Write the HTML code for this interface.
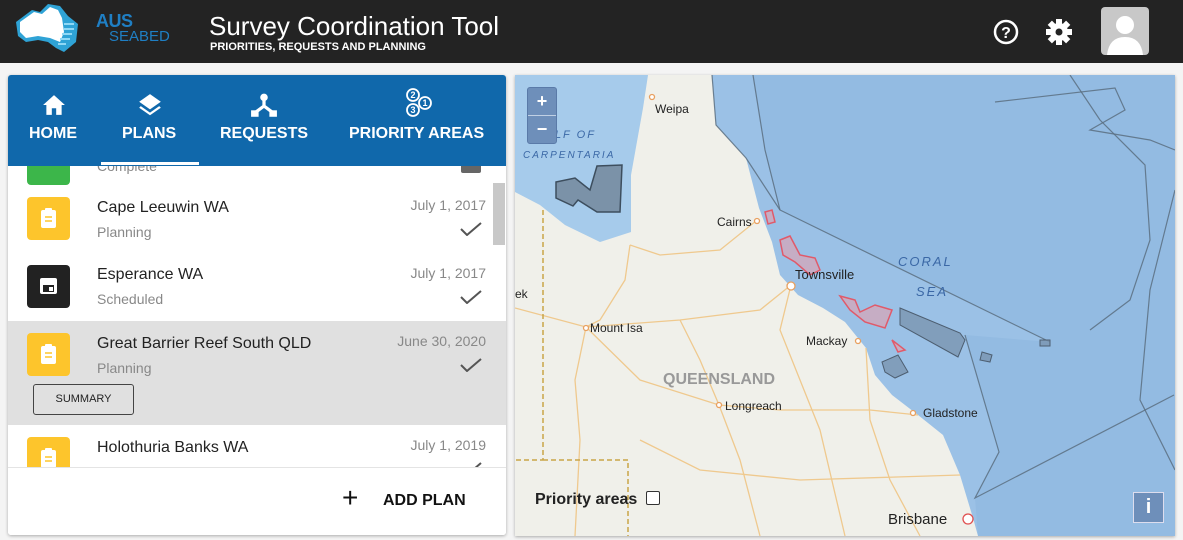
<!DOCTYPE html>
<html><head><meta charset="utf-8">
<style>
*{box-sizing:border-box;margin:0;padding:0}
body{width:1183px;height:540px;overflow:hidden;background:#f4f4f4;font-family:"Liberation Sans",sans-serif;position:relative}
.hdr{position:absolute;left:0;top:0;width:1183px;height:63px;background:#232323}
.abs{position:absolute}
.panel{position:absolute;left:8px;top:75px;width:498px;height:460px;background:#fff;box-shadow:0 1px 3px rgba(0,0,0,.3);overflow:hidden;border-radius:3px}
.tabs{position:absolute;left:0;top:0;width:498px;height:91px;background:#1068ab;color:#fff}
.tab{position:absolute;top:50px;font-size:16px;font-weight:bold;text-align:center}
.row{position:absolute;left:0;width:498px}
.ic{position:absolute;left:19px;width:43px;height:43px;border-radius:4px;background:#fdc52c}
.t{position:absolute;left:89px;font-size:16px;color:#222}
.s{position:absolute;left:89px;font-size:14px;color:#888}
.d{position:absolute;right:20px;font-size:14px;color:#888}
.ck{position:absolute;left:452px;width:22px;height:14px}
.map{position:absolute;left:515px;top:75px;width:660px;height:461px;overflow:hidden;background:#99bfe4;box-shadow:0 1px 3px rgba(0,0,0,.3)}
</style></head><body>
<div class="hdr">
 <svg class="abs" style="left:12px;top:2px" width="70" height="52" viewBox="0 0 70 52">
  <path d="M4 20 L20 8 L28 10 L36 2 L48 4 L56 14 L66 22 L64 40 L52 50 L44 46 L36 40 L26 38 L14 40 L6 34 Z" fill="#2fa3d6"/>
  <path d="M8 20 L22 10 L30 12 L38 5 L46 8 L50 16 L52 30 L48 40 L38 36 L26 34 L14 36 L8 30 Z" fill="#fff"/>
  <path d="M52 22 h10 M52 27 h10 M50 32 h10 M48 37 h10 M46 42 h8" stroke="#8fd8f5" stroke-width="2"/>
 </svg>
 <div class="abs" style="left:96px;top:12px;font-size:18px;font-weight:bold;color:#1f7fc4;letter-spacing:-0.5px;line-height:18px">AUS</div>
 <div class="abs" style="left:109px;top:29px;font-size:15px;color:#1f7fc4;line-height:16px">SEABED</div>
 <div class="abs" style="left:209px;top:11px;font-size:26px;color:#fff;line-height:30px">Survey Coordination Tool</div>
 <div class="abs" style="left:210px;top:41px;font-size:11px;font-weight:bold;color:#fff">PRIORITIES, REQUESTS AND PLANNING</div>
 <svg class="abs" style="left:992px;top:18px" width="28" height="28" viewBox="0 0 28 28"><circle cx="14" cy="14" r="11" fill="none" stroke="#fff" stroke-width="2.5"/><text x="14" y="20" fill="#fff" font-size="16" font-weight="bold" text-anchor="middle" font-family="Liberation Sans">?</text></svg>
 <svg class="abs" style="left:1045px;top:18px" width="28" height="28" viewBox="0 0 28 28"><g fill="#fff" transform="translate(14 14)"><circle r="9"/><g id="tt"><rect x="-3" y="-13" width="6" height="6"/></g><use href="#tt" transform="rotate(45)"/><use href="#tt" transform="rotate(90)"/><use href="#tt" transform="rotate(135)"/><use href="#tt" transform="rotate(180)"/><use href="#tt" transform="rotate(225)"/><use href="#tt" transform="rotate(270)"/><use href="#tt" transform="rotate(315)"/></g><circle cx="14" cy="14" r="3.5" fill="#232323"/></svg>
 <div class="abs" style="left:1101px;top:7px;width:48px;height:48px;background:#c8c8c8;border-radius:4px;overflow:hidden">
  <svg width="48" height="48"><circle cx="24" cy="18" r="9" fill="#fff"/><path d="M6 48 Q8 30 24 30 Q40 30 42 48 Z" fill="#fff"/></svg>
 </div>
</div>

<div class="panel">
 <div class="row" style="top:91px;height:19px"><div class="ic" style="top:-24px;background:#3cb64a"></div><div class="s" style="top:-8px">Complete</div><div class="abs" style="left:453px;top:-5px;width:20px;height:12px;background:#666;border-radius:2px"></div></div>
 <div class="row" style="top:110px;height:68px">
  <div class="ic" style="top:12px"><svg width="43" height="43"><rect x="14" y="13" width="15" height="18" rx="2" fill="#fff"/><rect x="18" y="11" width="7" height="4" rx="1" fill="#fff"/><path d="M18 20h7M18 24h7" stroke="#fdc52c" stroke-width="1.5"/></svg></div>
  <div class="t" style="top:14px">Cape Leeuwin WA</div><div class="s" style="top:39px">Planning</div>
  <div class="d" style="top:12px">July 1, 2017</div>
  <svg class="ck" style="top:37px" viewBox="0 0 22 14"><path d="M1 7 L7 13 L21 1" fill="none" stroke="#555" stroke-width="2"/></svg>
 </div>
 <div class="row" style="top:178px;height:68px">
  <div class="ic" style="top:12px;background:#222"><svg width="43" height="43"><rect x="13" y="13" width="17" height="16" rx="2" fill="#fff"/><rect x="16" y="20" width="11" height="7" fill="#222"/><rect x="22" y="22" width="4" height="4" fill="#fff"/></svg></div>
  <div class="t" style="top:13px">Esperance WA</div><div class="s" style="top:38px">Scheduled</div>
  <div class="d" style="top:12px">July 1, 2017</div>
  <svg class="ck" style="top:37px" viewBox="0 0 22 14"><path d="M1 7 L7 13 L21 1" fill="none" stroke="#555" stroke-width="2"/></svg>
 </div>
 <div class="row" style="top:246px;height:104px;background:#e0e0e0">
  <div class="ic" style="top:12px"><svg width="43" height="43"><rect x="14" y="13" width="15" height="18" rx="2" fill="#fff"/><rect x="18" y="11" width="7" height="4" rx="1" fill="#fff"/><path d="M18 20h7M18 24h7" stroke="#fdc52c" stroke-width="1.5"/></svg></div>
  <div class="t" style="top:14px">Great Barrier Reef South QLD</div><div class="s" style="top:39px">Planning</div>
  <div class="d" style="top:12px">June 30, 2020</div>
  <svg class="ck" style="top:37px" viewBox="0 0 22 14"><path d="M1 7 L7 13 L21 1" fill="none" stroke="#555" stroke-width="2"/></svg>
  <div class="abs" style="left:25px;top:63px;width:101px;height:31px;border:1.5px solid #444;border-radius:3px;font-size:11px;text-align:center;line-height:28px;color:#222">SUMMARY</div>
 </div>
 <div class="row" style="top:350px;height:42px;overflow:hidden">
  <div class="ic" style="top:12px"><svg width="43" height="43"><rect x="14" y="13" width="15" height="18" rx="2" fill="#fff"/><rect x="18" y="11" width="7" height="4" rx="1" fill="#fff"/><path d="M18 20h7M18 24h7" stroke="#fdc52c" stroke-width="1.5"/></svg></div>
  <div class="t" style="top:14px">Holothuria Banks WA</div><div class="s" style="top:39px">Planning</div>
  <div class="d" style="top:12px">July 1, 2019</div>
  <svg class="ck" style="top:37px" viewBox="0 0 22 14"><path d="M1 7 L7 13 L21 1" fill="none" stroke="#555" stroke-width="2"/></svg>
 </div>
 <div class="abs" style="left:485px;top:108px;width:12px;height:62px;background:#c8c8c8"></div>
 <div class="abs" style="left:0;top:392px;width:498px;height:68px;background:#fff;border-top:1px solid #e4e4e4">
  <div class="abs" style="left:334px;top:16px;font-size:28px;color:#111;line-height:28px">+</div>
  <div class="abs" style="left:375px;top:24px;font-size:16px;font-weight:bold;color:#111">ADD PLAN</div>
 </div>
 <div class="tabs">
  <svg class="abs" style="left:34px;top:19px" width="24" height="22" viewBox="0 0 22 20"><path d="M11 1 L21 10 H18 V19 H13 V13 H9 V19 H4 V10 H1 Z" fill="#fff"/></svg>
  <div class="tab" style="left:21px">HOME</div>
  <svg class="abs" style="left:129px;top:17px" width="26" height="26" viewBox="0 0 24 24"><path d="M12 2 L22 9 L12 16 L2 9 Z" fill="#fff"/><path d="M3.5 13 L12 19 L20.5 13 L22 14.5 L12 21.5 L2 14.5Z" fill="#fff"/></svg>
  <div class="tab" style="left:114px">PLANS</div>
  <div class="abs" style="left:93px;top:87px;width:98px;height:3px;background:#fff"></div>
  <svg class="abs" style="left:242px;top:18px" width="28" height="26" viewBox="0 0 26 24"><circle cx="13" cy="4" r="3.5" fill="#fff"/><path d="M13 6 V12 L5 18 M13 12 L21 18" stroke="#fff" stroke-width="3" fill="none"/><rect x="1" y="16" width="7" height="6" fill="#fff"/><rect x="18" y="16" width="7" height="6" fill="#fff"/></svg>
  <div class="tab" style="left:212px">REQUESTS</div>
  <svg class="abs" style="left:393px;top:12px" width="34" height="32" viewBox="0 0 34 32" font-family="Liberation Sans" font-size="9" font-weight="bold" fill="#fff" text-anchor="middle"><g fill="none" stroke="#fff" stroke-width="1.8"><circle cx="12" cy="8" r="6"/><circle cx="24" cy="16" r="6"/><circle cx="12" cy="23" r="6"/></g><text x="12" y="11">2</text><text x="24" y="19">1</text><text x="12" y="26">3</text></svg>
  <div class="tab" style="left:341px">PRIORITY AREAS</div>
 </div>
</div>

<div class="map">
<svg width="660" height="461" viewBox="515 75 660 461" style="position:absolute;left:0;top:0">
 <rect x="515" y="75" width="660" height="461" fill="#9bc1e6"/>
 <path d="M753 75 L765 150 L780 210 L1050 342 L965 335 L999 452 L975 498 L978 536 L1175 536 L1175 75 Z" fill="#93bbe2"/>
 <path d="M515 75 L515 192 L540 205 L565 225 L600 242 L631 232 L631 175 L643 108 L648 75 Z" fill="#a6cbeb"/>
 <path d="M515 192 L540 205 L565 225 L600 242 L631 232 L631 175 L643 108 L648 75 L712 75 L716 125 L746 158 L759 208 L772 242 L780 275 L798 295 L823 308 L845 322 L866 348 L875 375 L892 395 L918 415 L943 435 L960 475 L973 518 L978 536 L515 536 Z" fill="#f0f0ea"/>
 <g fill="none" stroke="#efc98e" stroke-width="1.3">
  <path d="M630 245 L625 280 L600 320 L586 327 L575 380 L580 440 L575 536"/>
  <path d="M515 308 L586 327 L680 320 L760 310 L791 285"/>
  <path d="M630 245 L660 255 L720 250 L756 221"/>
  <path d="M586 327 L640 380 L719 405 L780 410 L870 410 L918 415"/>
  <path d="M791 285 L780 330 L800 380 L820 430 L845 536"/>
  <path d="M719 405 L740 460 L760 536"/>
  <path d="M866 348 L870 420 L890 480 L920 536"/>
  <path d="M640 440 L700 470 L800 480 L960 475"/>
  <path d="M680 320 L700 360 L719 405"/>
 </g>
 <path d="M543 210 V460 H515 M543 460 H628 V536" fill="none" stroke="#c9a548" stroke-width="1.5" stroke-dasharray="5 3"/>
 <g fill="none" stroke="#5b6e80" stroke-width="1.2" stroke-opacity=".85">
  <path d="M753 75 L765 150 L780 210 L1050 342"/>
  <path d="M712 75 L716 125 L746 158 L780 210"/>
  <path d="M965 335 L999 452 L975 498 L1174 395"/>
  <path d="M995 102 L1115 88 L1125 110 L1090 130 L1150 140 L1175 150"/>
  <path d="M1070 75 L1100 120 L1145 165 L1150 240 L1130 300 L1090 330"/>
  <path d="M1175 190 L1150 290 L1140 400 L1175 470"/>
 </g>
 <path d="M556 182 L575 178 L590 190 L597 166 L622 165 L620 212 L597 212 L578 200 L573 206 L556 198 Z" fill="#7b92a8" stroke="#3d4e5e" stroke-width="1.5"/>
 <g fill="#e3a0ad" fill-opacity=".6" stroke="#e05a6a" stroke-width="1.5">
  <path d="M780 240 L790 236 L800 255 L815 258 L820 270 L810 275 L795 262 L783 255 Z"/>
  <path d="M840 296 L855 300 L860 312 L875 305 L892 310 L885 328 L865 322 L850 310 Z"/>
  <path d="M892 340 L905 350 L898 352 Z"/>
  <path d="M765 212 L772 210 L775 222 L768 224 Z"/>
 </g>
 <g fill="#7a95b0" fill-opacity=".8" stroke="#4d5e70" stroke-width="1">
  <path d="M900 308 L960 333 L965 340 L958 357 L900 325 Z"/>
  <path d="M882 362 L898 355 L908 372 L895 378 L885 372 Z"/>
  <path d="M982 352 L992 355 L990 362 L980 360 Z"/>
  <path d="M1040 340 L1050 340 L1050 346 L1040 346 Z"/>
 </g>
 <g font-family="Liberation Sans" font-size="12" fill="#222">
  <text x="655" y="113">Weipa</text>
  <text x="717" y="226">Cairns</text>
  <text x="795" y="279" font-size="13">Townsville</text>
  <text x="590" y="332">Mount Isa</text>
  <text x="806" y="345">Mackay</text>
  <text x="725" y="410">Longreach</text>
  <text x="923" y="417">Gladstone</text>
  <text x="888" y="524" font-size="15">Brisbane</text>
  <text x="515" y="298">ek</text>
 </g>
 <g fill="#fff" stroke="#e8a060" stroke-width="1.3">
  <circle cx="652" cy="97" r="2.5"/><circle cx="757" cy="221" r="2.5"/><circle cx="791" cy="286" r="4"/><circle cx="586" cy="328" r="2.5"/><circle cx="858" cy="341" r="2.5"/><circle cx="719" cy="405" r="2.5"/><circle cx="913" cy="413" r="2.5"/><circle cx="968" cy="519" r="5" stroke="#e05050"/>
 </g>
 <text x="663" y="384" font-family="Liberation Sans" font-size="16" font-weight="bold" fill="#999">QUEENSLAND</text>
 <g font-family="Liberation Sans" font-size="11" font-style="italic" fill="#3b68a6" letter-spacing="2">
  <text x="545" y="138">ULF OF</text><text x="523" y="158" font-size="10">CARPENTARIA</text>
  <text x="898" y="266" font-size="13">CORAL</text><text x="916" y="296" font-size="13">SEA</text>
 </g>
</svg>
 <div class="abs" style="left:12px;top:12px;width:30px;height:57px;background:#6e8fba;border:1px solid #5a7aa8;border-radius:3px;color:#fff;font-weight:bold;text-align:center">
  <div style="height:28px;line-height:26px;font-size:18px;border-bottom:1px solid #c0d0e4">+</div>
  <div style="line-height:26px;font-size:18px">−</div>
 </div>
 <div class="abs" style="left:20px;top:416px;font-size:16px;font-weight:bold;color:#222">Priority areas</div>
 <div class="abs" style="left:131px;top:416px;width:14px;height:14px;border:1.5px solid #333;border-radius:2px;background:#fff"></div>
 <div class="abs" style="left:618px;top:417px;width:31px;height:31px;background:#6e8fba;border:1px solid #dde;color:#fff;font-size:20px;font-weight:bold;text-align:center;line-height:29px">i</div>
</div>
</body></html>
